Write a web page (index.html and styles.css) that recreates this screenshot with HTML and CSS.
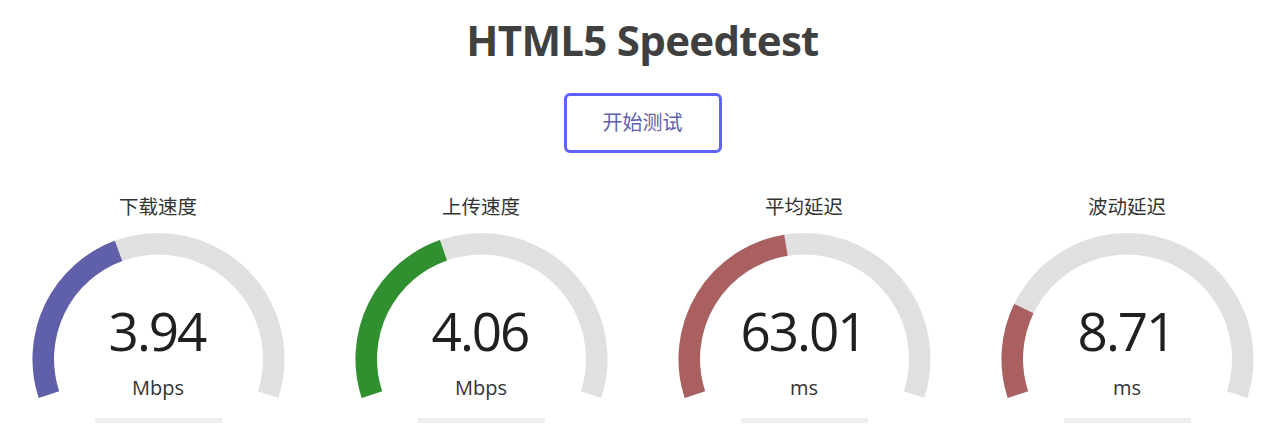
FILE: index.html
```html
<!DOCTYPE html>
<html lang="zh-CN">
<head>
  <meta charset="UTF-8" />
  <meta name="viewport" content="width=device-width, initial-scale=1.0"/>
  <title>HTML5 Speedtest</title>
  <link rel="stylesheet" href="styles.css">
</head>
<body>
  <div class="page">
    <h1>HTML5 Speedtest</h1>

    <div class="start-btn">开始测试</div>

    <div class="test-wrap">
      <!-- 下载 -->
      <div class="test-area">
        <div class="test-name">下载速度</div>
        <div class="meter">
          <svg viewBox="0 0 323 175" width="323" height="175">
            <path class="meter-bk" d="M51.89 166.61 A115.25 115.25 0 1 1 271.11 166.61" />
            <path d="M51.89 166.61 A115.25 115.25 0 0 1 121.52 22.91" stroke="#6060AA" />
          </svg>
          <div class="meter-text">3.94</div>
          <div class="unit">Mbps</div>
        </div>
        <div class="progress"></div>
      </div>

      <!-- 上传 -->
      <div class="test-area">
        <div class="test-name">上传速度</div>
        <div class="meter">
          <svg viewBox="0 0 323 175" width="323" height="175">
            <path class="meter-bk" d="M51.89 166.61 A115.25 115.25 0 1 1 271.11 166.61" />
            <path d="M51.89 166.61 A115.25 115.25 0 0 1 123.42 22.23" stroke="#309030" />
          </svg>
          <div class="meter-text">4.06</div>
          <div class="unit">Mbps</div>
        </div>
        <div class="progress"></div>
      </div>

      <!-- ping -->
      <div class="test-area">
        <div class="test-name">平均延迟</div>
        <div class="meter">
          <svg viewBox="0 0 323 175" width="323" height="175">
            <path class="meter-bk" d="M51.89 166.61 A115.25 115.25 0 1 1 271.11 166.61" />
            <path d="M51.89 166.61 A115.25 115.25 0 0 1 142.93 17.26" stroke="#AA6060" />
          </svg>
          <div class="meter-text">63.01</div>
          <div class="unit">ms</div>
        </div>
        <div class="progress"></div>
      </div>

      <!-- jitter -->
      <div class="test-area">
        <div class="test-name">波动延迟</div>
        <div class="meter">
          <svg viewBox="0 0 323 175" width="323" height="175">
            <path class="meter-bk" d="M51.89 166.61 A115.25 115.25 0 1 1 271.11 166.61" />
            <path d="M51.89 166.61 A115.25 115.25 0 0 1 57.82 80.67" stroke="#AA6060" />
          </svg>
          <div class="meter-text">8.71</div>
          <div class="unit">ms</div>
        </div>
        <div class="progress"></div>
      </div>
    </div>
  </div>
</body>
</html>
```

FILE: styles.css
```css
* {
  box-sizing: border-box;
}
html, body {
  margin: 0;
  padding: 0;
  overflow: hidden;
}
body {
  font-family: 'Open Sans', 'Noto Sans CJK SC', sans-serif;
  background-color: #ffffff;
  color: #202020;
  text-align: center;
}
.page {
  padding-left: 10px;
}

h1 {
  margin: 15px 0 0;
  font-size: 42px;
  line-height: 50px;
  font-weight: 700;
  letter-spacing: -0.7px;
  color: #404040;
}

.start-btn {
  display: inline-block;
  margin-top: 28px;
  width: 158px;
  height: 60px;
  line-height: 54px;
  border: 3px solid #6060FF;
  border-radius: 6px;
  color: #6060AA;
  font-size: 20px;
}

.test-wrap {
  display: flex;
  justify-content: center;
  margin: 40px -13.5px 0;
}
.test-area {
  width: 323px;
  flex: none;
}
.test-name {
  font-size: 19.5px;
  line-height: 28px;
  color: #333;
}
.meter {
  position: relative;
  margin-top: 7px;
  height: 175px;
}
.meter svg {
  display: block;
}
.meter svg path {
  fill: none;
  stroke-width: 21.5;
}
.meter svg .meter-bk {
  stroke: #E0E0E0;
}
.meter-text {
  position: absolute;
  top: 76px;
  left: 0;
  width: 100%;
  font-size: 53px;
  line-height: 1;
  letter-spacing: -2px;
  text-indent: -2px;
}
.unit {
  position: absolute;
  top: 150px;
  left: 0;
  width: 100%;
  font-size: 20px;
  line-height: 1;
  color: #333;
}
.progress {
  width: 127px;
  height: 5px;
  margin: 15px auto 0;
  background-color: #EEEEEE;
}
```
